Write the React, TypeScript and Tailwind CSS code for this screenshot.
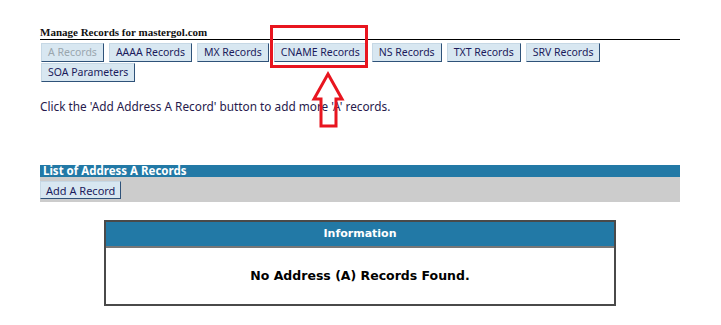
const tabs = [
  { label: "A Records", active: true },
  { label: "AAAA Records" },
  { label: "MX Records" },
  { label: "CNAME Records" },
  { label: "NS Records" },
  { label: "TXT Records" },
  { label: "SRV Records" },
  { label: "SOA Parameters" },
];

const TabButton = ({ label, active = false }: { label: string; active?: boolean }) => (
  <button
    className={`h-[19px] px-[6px] whitespace-nowrap bg-[#d8e7f1] border border-t-[#c6d8e5] border-l-[#c6d8e5] border-b-[#2f5279] border-r-[#2f5279] text-[10.5px] leading-none font-['Noto_Sans',sans-serif] ${
      active ? "text-[#9aa6ae]" : "text-[#1b1b5c]"
    }`}
  >
    {label}
  </button>
);

export default function App() {
  return (
    <div className="relative w-[721px] h-[325px] bg-white overflow-hidden">
      <div className="pl-10 pt-[26px] w-[680px]">
        {/* heading */}
        <div className="border-b border-black pb-[1px] text-[11px] leading-[12px] font-bold font-['Liberation_Serif',serif] text-[#111]">
          Manage Records for mastergol.com
        </div>

        {/* record type tabs */}
        <div className="flex flex-wrap gap-x-[5px] gap-y-px mt-[3px] pl-px">
          {tabs.map((t) => (
            <TabButton key={t.label} label={t.label} active={t.active} />
          ))}
        </div>

        <p className="mt-[16px] text-[11.8px] leading-4 text-[#271a4c] font-['Noto_Sans',sans-serif]">
          Click the 'Add Address A Record' button to add more 'A' records.
        </p>

        {/* list section */}
        <div className="mt-[51px]">
          <div className="h-[12px] bg-[#2279a6] text-white text-[11.5px] leading-[12px] font-bold pl-[3px] font-['Noto_Sans',sans-serif]">
            List of Address A Records
          </div>
          <div className="h-[25px] bg-[#cccccc] pt-[4px] flex items-start">
            <button className="h-[18px] px-[5px] whitespace-nowrap bg-[#d8e7f1] border border-t-[#c6d8e5] border-l-[#c6d8e5] border-b-[#2f5279] border-r-[#2f5279] text-[11px] leading-none text-[#1b1b5c] font-['Noto_Sans',sans-serif]">
              Add A Record
            </button>
          </div>
        </div>
      </div>

      {/* information box */}
      <div className="ml-[104px] mt-[18px] w-[512px] border-2 border-[#4a4a4a]">
        <div className="h-[26px] bg-[#2279a6] border-b-2 border-[#777] flex items-center justify-center text-white text-[11px] font-bold font-['DejaVu_Sans',sans-serif]">
          Information
        </div>
        <div className="h-[56px] flex items-center justify-center text-[12.5px] font-bold text-black font-['DejaVu_Sans',sans-serif]">
          No Address (A) Records Found.
        </div>
      </div>

      {/* annotation: highlight box and arrow */}
      <svg className="absolute left-0 top-0 pointer-events-none" width="721" height="325">
        <rect x="271.5" y="26.5" width="95" height="40" fill="none" stroke="#e8151f" strokeWidth="3" />
        <polygon
          points="328,74 342,99 336,99 336,126 321,126 321,99 314,99"
          fill="none"
          stroke="#e8151f"
          strokeWidth="3"
          strokeLinejoin="miter"
        />
      </svg>
    </div>
  );
}
